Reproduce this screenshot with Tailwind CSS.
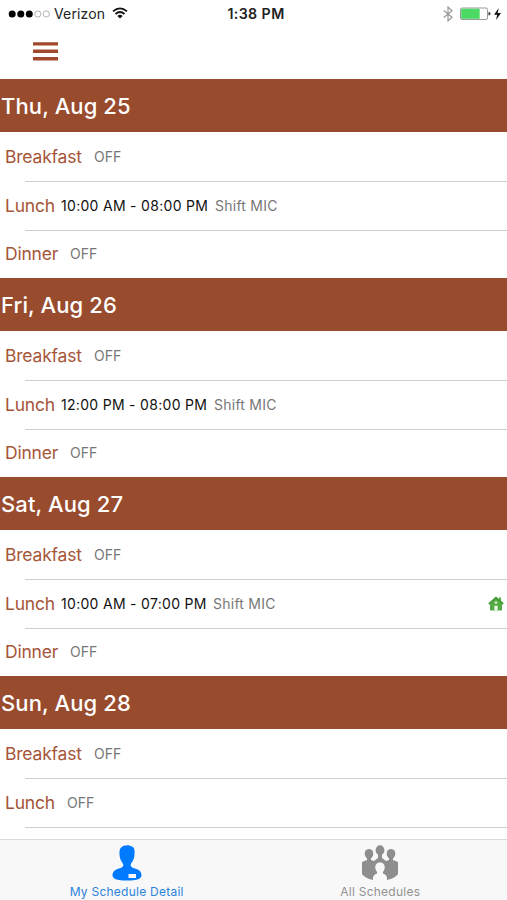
<!DOCTYPE html>
<html lang="en">
<head>
<meta charset="utf-8">
<title>My Schedule</title>
<script src="https://cdn.jsdelivr.net/npm/@tailwindcss/browser@4"></script>
</head>
<body class="bg-white">
<div class="w-[507px] h-[900px] flex flex-col overflow-hidden bg-white font-['Inter','Liberation_Sans',sans-serif]">
  <header class="h-[79px] shrink-0">
    <div class="h-[28px] grid grid-cols-3 items-center text-[14px] leading-[28px] text-[#222]">
      <div class="flex items-center pl-[8px]">
        <svg class="w-[43px] h-[10px] shrink-0" viewBox="0 0 43 10"><g fill="#000"><circle cx="4.2" cy="5" r="3.5"/><circle cx="12.8" cy="5" r="3.5"/><circle cx="21.3" cy="5" r="3.5"/></g><g fill="none" stroke="#aaa" stroke-width=".9"><circle cx="29.8" cy="5" r="3.1"/><circle cx="38.3" cy="5" r="3.1"/></g></svg>
        <span class="ml-[3px] w-[52px] whitespace-nowrap tracking-[0.15px]">Verizon</span>
        <svg class="w-[16px] h-[12px] ml-[6px] -mt-[2px]" viewBox="0 0 16 12" fill="none" stroke="#111" stroke-width="1.7"><path d="M1 4.4Q8-1.7 15 4.4M3.5 7Q8 3 12.5 7"/><path d="M5.4 9Q8 6.7 10.6 9L8 11.6Z" fill="#111" stroke="none"/></svg>
      </div>
      <div class="text-center font-semibold text-[14.2px] tracking-[0.4px] pl-[5px] text-[#222]">1:38 PM</div>
      <div class="flex items-center justify-end pr-[5px]">
        <svg class="w-[10px] h-[16px] mr-[7px]" viewBox="0 0 10 16" fill="none" stroke="#999" stroke-width="1.2"><path d="M.8 4.5 9 11.3 5 15V1l4 3.7L.8 11.5"/></svg>
        <svg class="w-[42px] h-[14px]" viewBox="0 0 42 14"><rect x=".5" y="1" width="27" height="11.5" rx="1.5" fill="#fff" stroke="#999"/><rect x="1.2" y="1.7" width="18.5" height="10.1" fill="#4cd964"/><path d="M28.5 5q2 0 2 1.8t-2 1.8z" fill="#333"/><path d="M38.8 1 34 7.7h3.2L36 13l5-7h-3.4z" fill="#111"/></svg>
      </div>
    </div>
    <svg class="w-[25px] h-[19px] ml-[33px] mt-[14px]" viewBox="0 0 25 19" fill="#a1492d"><path d="M0 .2h25v3.4H0zM0 7.6h25V11H0zM0 15h25v3.4H0z"/></svg>
  </header>

  <main class="h-[760px] shrink-0 overflow-hidden">
    <section class="h-[199px]">
      <h2 class="h-[53px] pl-[1px] bg-[#994b2e] text-white text-[22px] leading-[55px] font-medium tracking-[0.1px]">Thu, Aug 25</h2>
      <div class="h-[49px] pl-[5px] flex items-start leading-[50px]"><span class="w-[89px] text-[17.5px] tracking-[-0.2px] text-[#a65539]">Breakfast</span><span class="text-[14px] text-[#777]">OFF</span></div>
      <div class="h-[49px] pl-[5px] flex items-start leading-[50px] relative"><i class="absolute top-0 left-[25px] right-0 h-px bg-[#cfcfd1]"></i><span class="w-[56px] text-[17.5px] tracking-[-0.2px] text-[#a65539]">Lunch</span><span class="w-[154px] text-[14px] text-[#111] tracking-[0.3px]">10:00 AM - 08:00 PM</span><span class="text-[14px] tracking-[0.25px] text-[#777]">Shift MIC</span></div>
      <div class="h-[48px] pl-[5px] flex items-start leading-[48px] relative"><i class="absolute top-0 left-[25px] right-0 h-px bg-[#cfcfd1]"></i><span class="w-[65px] text-[17.5px] tracking-[-0.2px] text-[#a65539]">Dinner</span><span class="text-[14px] text-[#777]">OFF</span></div>
    </section>
    <section class="h-[199px]">
      <h2 class="h-[53px] pl-[1px] bg-[#994b2e] text-white text-[22px] leading-[55px] font-medium tracking-[0.1px]">Fri, Aug 26</h2>
      <div class="h-[49px] pl-[5px] flex items-start leading-[50px]"><span class="w-[89px] text-[17.5px] tracking-[-0.2px] text-[#a65539]">Breakfast</span><span class="text-[14px] text-[#777]">OFF</span></div>
      <div class="h-[49px] pl-[5px] flex items-start leading-[50px] relative"><i class="absolute top-0 left-[25px] right-0 h-px bg-[#cfcfd1]"></i><span class="w-[56px] text-[17.5px] tracking-[-0.2px] text-[#a65539]">Lunch</span><span class="w-[153px] text-[14px] text-[#111] tracking-[0.3px]">12:00 PM - 08:00 PM</span><span class="text-[14px] tracking-[0.25px] text-[#777]">Shift MIC</span></div>
      <div class="h-[48px] pl-[5px] flex items-start leading-[48px] relative"><i class="absolute top-0 left-[25px] right-0 h-px bg-[#cfcfd1]"></i><span class="w-[65px] text-[17.5px] tracking-[-0.2px] text-[#a65539]">Dinner</span><span class="text-[14px] text-[#777]">OFF</span></div>
    </section>
    <section class="h-[199px]">
      <h2 class="h-[53px] pl-[1px] bg-[#994b2e] text-white text-[22px] leading-[55px] font-medium tracking-[0.1px]">Sat, Aug 27</h2>
      <div class="h-[49px] pl-[5px] flex items-start leading-[50px]"><span class="w-[89px] text-[17.5px] tracking-[-0.2px] text-[#a65539]">Breakfast</span><span class="text-[14px] text-[#777]">OFF</span></div>
      <div class="h-[49px] pl-[5px] pr-[3px] flex items-start leading-[50px] relative"><i class="absolute top-0 left-[25px] right-0 h-px bg-[#cfcfd1]"></i><span class="w-[56px] text-[17.5px] tracking-[-0.2px] text-[#a65539]">Lunch</span><span class="w-[152px] text-[14px] text-[#111] tracking-[0.3px]">10:00 AM - 07:00 PM</span><span class="text-[14px] tracking-[0.25px] text-[#777]">Shift MIC</span>
        <svg class="w-[16px] h-[15px] ml-auto self-center" viewBox="0 0 16 15"><path d="M8 .5 11 3V1.5h2v3.300L15.700 7.500 14 9v5.500H2V9L.3 7.500Z" fill="#55aa45"/><path d="M6.300 14.500V9.800h3.400v4.700z" fill="#e6f7df"/><circle cx="8" cy="6.600" r="1.400" fill="#c6edb9"/><path d="M1 7.700 8 1.700l7 6" fill="none" stroke="#409634" stroke-width="1.200"/></svg>
      </div>
      <div class="h-[48px] pl-[5px] flex items-start leading-[48px] relative"><i class="absolute top-0 left-[25px] right-0 h-px bg-[#cfcfd1]"></i><span class="w-[65px] text-[17.5px] tracking-[-0.2px] text-[#a65539]">Dinner</span><span class="text-[14px] text-[#777]">OFF</span></div>
    </section>
    <section class="h-[199px]">
      <h2 class="h-[53px] pl-[1px] bg-[#994b2e] text-white text-[22px] leading-[55px] font-medium tracking-[0.1px]">Sun, Aug 28</h2>
      <div class="h-[49px] pl-[5px] flex items-start leading-[50px]"><span class="w-[89px] text-[17.5px] tracking-[-0.2px] text-[#a65539]">Breakfast</span><span class="text-[14px] text-[#777]">OFF</span></div>
      <div class="h-[49px] pl-[5px] flex items-start leading-[50px] relative"><i class="absolute top-0 left-[25px] right-0 h-px bg-[#cfcfd1]"></i><span class="w-[62px] text-[17.5px] tracking-[-0.2px] text-[#a65539]">Lunch</span><span class="text-[14px] text-[#777]">OFF</span></div>
      <div class="h-[48px] relative"><i class="absolute top-0 left-[25px] right-0 h-px bg-[#cfcfd1]"></i></div>
    </section>
  </main>

  <nav class="h-[61px] shrink-0 grid grid-cols-2 bg-[#f8f8f8] border-t border-[#dcdcdc] text-[12px] leading-[14px] tracking-[0.25px]">
    <div class="flex flex-col items-center pt-[5px] text-[#2b83dc]">
      <svg class="w-[30px] h-[36px]" viewBox="0 0 30 36"><path d="M15.500.3c2-.5 3 .8 4.500 1.200 2.400 1 2.800 4 2.500 7 .1 4-1.300 7.500-3.400 10-1.200 2 .3 4 3 4.700 4.700 1.200 7.400 3.200 7.400 7 0 3.600-4 5.300-14.500 5.300S.5 33.800.5 30.200c0-3.800 2.700-5.800 7.400-7 2.700-.7 4.200-2.700 3-4.700-2.100-2.500-3.500-6-3.400-10C7.200 3.500 9.500.5 15.500.3Z" fill="#007aff"/><path d="M16.500 29h7.500v4h-7.500z" fill="#f8f8f8"/></svg>
      <span class="mt-[4px]">My Schedule Detail</span>
    </div>
    <div class="flex flex-col items-center pt-[5px] text-[#929292]">
      <svg class="w-[36px] h-[36px]" viewBox="0 0 36 36"><g fill="#8e8e8e"><ellipse cx="7" cy="8.800" rx="4.300" ry="4.900"/><ellipse cx="29" cy="8.800" rx="4.300" ry="4.900"/><ellipse cx="18" cy="5.200" rx="4.400" ry="5"/><path d="M5 12h4v3l3 1 4-3V9h4v4l4 3 3-1v-3h4v3l5 2v12c-2 3-6 5-11 6H11C6 34 2 32 0 29V17l5-2Z"/></g><path d="M18 17.500c3 0 4.900 2 4.700 5-.1 2-1 3.500-1.900 4.800l.3 1.400c3 .8 4 2.300 4 5.800L23.500 36h-11L10.900 34.500c0-3.500 1-5 4-5.800l.3-1.400c-.9-1.300-1.800-2.800-1.900-4.800-.2-3 1.700-5 4.700-5Z" fill="#f8f8f8"/></svg>
      <span class="mt-[4px]">All Schedules</span>
    </div>
  </nav>
</div>
</body>
</html>
